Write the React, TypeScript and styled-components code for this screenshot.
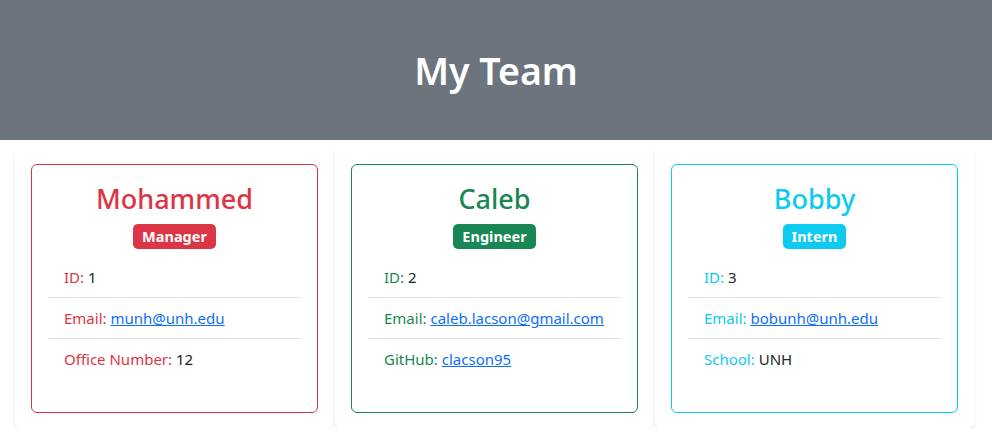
import React from "react";
import styled, { createGlobalStyle } from "styled-components";

const Global = createGlobalStyle`
  html, body { margin: 0; padding: 0; background: #fff; }
  body { font-family: "Noto Sans", "Open Sans", sans-serif; color: #212529; font-size: 16px; }
  * { box-sizing: border-box; }
`;

const Header = styled.header`
  height: 140px;
  background: #6c757d;
  display: flex;
  align-items: center;
  justify-content: center;
`;

const Title = styled.h1`
  margin: 0;
  color: #fff;
  font-size: 37.5px;
  font-weight: 600;
  line-height: 1.2;
`;

const Grid = styled.main`
  display: flex;
  gap: 1px;
  padding: 8px 0 0 15px;
`;

const Outer = styled.section`
  width: 319px;
  height: 280px;
  background: #fff;
  border-radius: 6px;
  box-shadow: 0 2px 4px rgba(0, 0, 0, 0.075);
  padding: 16px 16px 15px;
`;

const Inner = styled.div<{ $c: string }>`
  border: 1px solid ${(p) => p.$c};
  border-radius: 6px;
  height: 249px;
  padding: 16px 16px 0;
  display: flex;
  flex-direction: column;
  align-items: center;
`;

const Name = styled.h2<{ $c: string }>`
  margin: 0;
  color: ${(p) => p.$c};
  font-size: 27px;
  font-weight: 500;
  line-height: 36px;
`;

const Badge = styled.span<{ $c: string }>`
  margin-top: 7px;
  background: ${(p) => p.$c};
  color: #fff;
  font-weight: 700;
  font-size: 14.5px;
  line-height: 25px;
  height: 25px;
  padding: 0 9px;
  border-radius: 5px;
`;

const List = styled.ul`
  list-style: none;
  margin: 8px 0 0;
  padding: 0;
  align-self: stretch;
`;

const Item = styled.li<{ $c: string }>`
  color: ${(p) => p.$c};
  padding: 8px 16px;
  line-height: 24px;
  font-size: 15px;
  border-bottom: 1px solid #dee2e6;
  &:last-child { border-bottom: none; }
`;

const Value = styled.span`
  color: #212529;
`;

const Link = styled.a`
  color: #0d6efd;
  text-decoration: underline;
`;

type Row = { label: string; value: string; href?: string };
type Emp = { name: string; role: string; color: string; rows: Row[] };

const team: Emp[] = [
  {
    name: "Mohammed",
    role: "Manager",
    color: "#dc3545",
    rows: [
      { label: "ID", value: "1" },
      { label: "Email", value: "munh@unh.edu", href: "mailto:munh@unh.edu" },
      { label: "Office Number", value: "12" },
    ],
  },
  {
    name: "Caleb",
    role: "Engineer",
    color: "#198754",
    rows: [
      { label: "ID", value: "2" },
      { label: "Email", value: "caleb.lacson@gmail.com", href: "mailto:caleb.lacson@gmail.com" },
      { label: "GitHub", value: "clacson95", href: "#" },
    ],
  },
  {
    name: "Bobby",
    role: "Intern",
    color: "#0dcaf0",
    rows: [
      { label: "ID", value: "3" },
      { label: "Email", value: "bobunh@unh.edu", href: "mailto:bobunh@unh.edu" },
      { label: "School", value: "UNH" },
    ],
  },
];

export default function App() {
  return (
    <>
      <Global />
      <Header>
        <Title>My Team</Title>
      </Header>
      <Grid>
        {team.map((e) => (
          <Outer key={e.name}>
            <Inner $c={e.color}>
              <Name $c={e.color}>{e.name}</Name>
              <Badge $c={e.color}>{e.role}</Badge>
              <List>
                {e.rows.map((r) => (
                  <Item key={r.label} $c={e.color}>
                    {r.label}:{" "}
                    {r.href ? <Link href={r.href}>{r.value}</Link> : <Value>{r.value}</Value>}
                  </Item>
                ))}
              </List>
            </Inner>
          </Outer>
        ))}
      </Grid>
    </>
  );
}
